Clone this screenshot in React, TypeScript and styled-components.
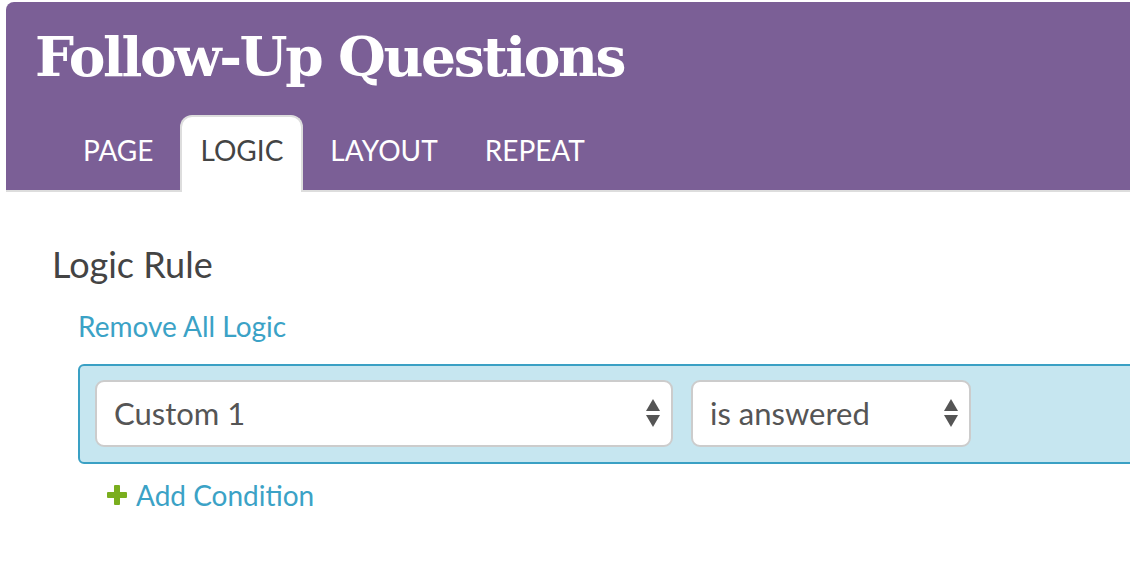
import React from 'react';
import styled, { createGlobalStyle } from 'styled-components';

const c = {
  purple: '#7b5f96',
  white: '#ffffff',
  text: '#444444',
  select: '#555555',
  link: '#3ba2c6',
  ruleBg: '#c6e6f0',
  ruleBorder: '#3aa0c4',
  green: '#7aae1e',
  line: '#dddddd',
  selectBorder: '#cccccc',
};

const GlobalStyle = createGlobalStyle`
  html, body {
    margin: 0;
    padding: 0;
    background: #fff;
    overflow: hidden;
  }
  body {
    font-family: Lato, "Open Sans", sans-serif;
  }
`;

const Page = styled.div`
  width: 1130px;
  height: 564px;
  padding: 2px 0 0 6px;
  box-sizing: border-box;
`;

const Header = styled.header`
  background: ${c.purple};
  border-top-left-radius: 8px;
  border-bottom: 2px solid ${c.line};
  padding: 20px 0 0 29px;
`;

const Title = styled.h1`
  margin: 0;
  font-family: "DejaVu Serif", serif;
  font-weight: bold;
  font-size: 55px;
  line-height: 70px;
  color: ${c.white};
  letter-spacing: -2.4px;
`;

const Tabs = styled.nav`
  display: flex;
  gap: 7px;
  margin-top: 23px;
  padding-left: 28px;
`;

const Tab = styled.div<{ $active?: boolean }>`
  height: 77px;
  box-sizing: border-box;
  padding: 0 18px 9px;
  display: flex;
  align-items: center;
  font-size: 28px;
  color: ${p => (p.$active ? c.text : c.white)};
  background: ${p => (p.$active ? c.white : 'transparent')};
  border: 2px solid ${p => (p.$active ? c.line : 'transparent')};
  border-bottom: none;
  border-radius: 12px 12px 0 0;
  margin-bottom: -2px;
`;

const Content = styled.main`
  padding: 52px 0 0 46px;
`;

const SectionTitle = styled.h2`
  margin: 0;
  font-size: 36px;
  font-weight: normal;
  color: ${c.text};
  line-height: 40px;
`;

const Link = styled.a`
  display: inline-flex;
  align-items: center;
  gap: 9px;
  color: ${c.link};
  font-size: 28px;
  text-decoration: none;
  cursor: pointer;
`;

const RemoveRow = styled.div`
  margin: 26px 0 0 26px;
  line-height: 32px;
  height: 32px;
`;

const RuleBox = styled.div`
  margin: 22px 0 0 26px;
  width: 1100px;
  box-sizing: border-box;
  background: ${c.ruleBg};
  border: 2px solid ${c.ruleBorder};
  border-radius: 6px;
  padding: 14px 15px 15px;
  display: flex;
  gap: 18px;
`;

const Select = styled.div<{ $w: number }>`
  width: ${p => p.$w}px;
  height: 67px;
  box-sizing: border-box;
  background: ${c.white};
  border: 2px solid ${c.selectBorder};
  border-radius: 9px;
  display: flex;
  align-items: center;
  justify-content: space-between;
  padding: 0 11px 2px 17px;
  font-size: 31px;
  color: ${c.select};
`;

const AddRow = styled.div`
  margin: 15px 0 0 55px;
  line-height: 32px;
  height: 32px;
`;

const Arrows = () => (
  <svg width="14" height="28" viewBox="0 0 14 28">
    <path d="M7 0 L14 12 L0 12 Z" fill="#555" />
    <path d="M0 16 L14 16 L7 28 Z" fill="#555" />
  </svg>
);

const Plus = () => (
  <svg width="20" height="20" viewBox="0 0 20 20">
    <rect x="7" y="0" width="6" height="20" rx="1" fill={c.green} />
    <rect x="0" y="7" width="20" height="6" rx="1" fill={c.green} />
  </svg>
);

export default function App() {
  return (
    <Page>
      <GlobalStyle />
      <Header>
        <Title>Follow-Up Questions</Title>
        <Tabs>
          <Tab>PAGE</Tab>
          <Tab $active>LOGIC</Tab>
          <Tab>LAYOUT</Tab>
          <Tab>REPEAT</Tab>
        </Tabs>
      </Header>
      <Content>
        <SectionTitle>Logic Rule</SectionTitle>
        <RemoveRow>
          <Link>Remove All Logic</Link>
        </RemoveRow>
        <RuleBox>
          <Select $w={578}>
            <span>Custom 1</span>
            <Arrows />
          </Select>
          <Select $w={280}>
            <span>is answered</span>
            <Arrows />
          </Select>
        </RuleBox>
        <AddRow>
          <Link>
            <Plus />
            Add Condition
          </Link>
        </AddRow>
      </Content>
    </Page>
  );
}
